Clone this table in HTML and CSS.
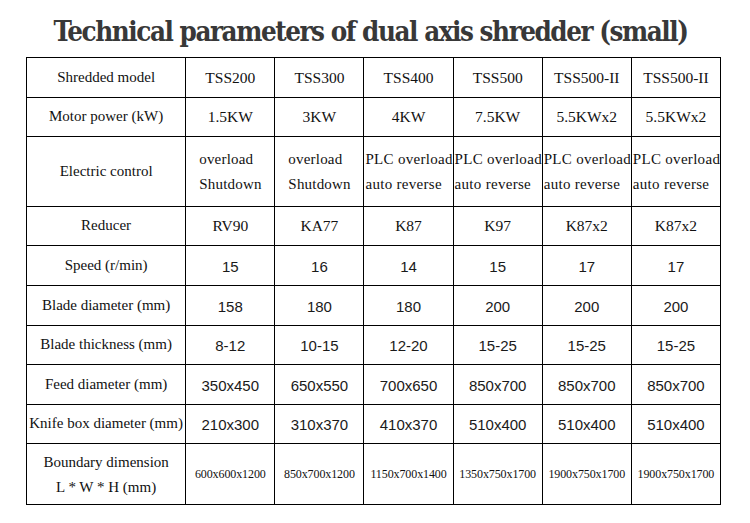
FILE: index.html
```html
<!DOCTYPE html>
<html>
<head>
<meta charset="utf-8">
<link rel="stylesheet" href="styles.css">
</head>
<body>
<div class="page">
  <h1 class="title">Technical parameters of dual axis shredder (small)</h1>
  <table class="spec">
    <colgroup>
      <col class="c-label"><col class="c-val"><col class="c-val"><col class="c-val"><col class="c-val"><col class="c-val"><col class="c-val">
    </colgroup>
    <tr class="r40">
      <td class="label">Shredded model</td>
      <td>TSS200</td><td>TSS300</td><td>TSS400</td><td>TSS500</td><td>TSS500-II</td><td>TSS500-II</td>
    </tr>
    <tr class="r39">
      <td class="label">Motor power (kW)</td>
      <td>1.5KW</td><td>3KW</td><td>4KW</td><td>7.5KW</td><td>5.5KWx2</td><td>5.5KWx2</td>
    </tr>
    <tr class="r70">
      <td class="label">Electric control</td>
      <td class="multi pad">overload<br>Shutdown</td>
      <td class="multi pad">overload<br>Shutdown</td>
      <td class="multi">PLC overload<br>auto reverse</td>
      <td class="multi">PLC overload<br>auto reverse</td>
      <td class="multi">PLC overload<br>auto reverse</td>
      <td class="multi">PLC overload<br>auto reverse</td>
    </tr>
    <tr class="r39">
      <td class="label">Reducer</td>
      <td>RV90</td><td>KA77</td><td>K87</td><td>K97</td><td>K87x2</td><td>K87x2</td>
    </tr>
    <tr class="r40">
      <td class="label">Speed (r/min)</td>
      <td class="num">15</td><td class="num">16</td><td class="num">14</td><td class="num">15</td><td class="num">17</td><td class="num">17</td>
    </tr>
    <tr class="r40">
      <td class="label">Blade diameter (mm)</td>
      <td class="num">158</td><td class="num">180</td><td class="num">180</td><td class="num">200</td><td class="num">200</td><td class="num">200</td>
    </tr>
    <tr class="r39">
      <td class="label">Blade thickness (mm)</td>
      <td class="num">8-12</td><td class="num">10-15</td><td class="num">12-20</td><td class="num">15-25</td><td class="num">15-25</td><td class="num">15-25</td>
    </tr>
    <tr class="r40">
      <td class="label">Feed diameter (mm)</td>
      <td class="num">350x450</td><td class="num">650x550</td><td class="num">700x650</td><td class="num">850x700</td><td class="num">850x700</td><td class="num">850x700</td>
    </tr>
    <tr class="r39">
      <td class="label">Knife box diameter (mm)</td>
      <td class="num">210x300</td><td class="num">310x370</td><td class="num">410x370</td><td class="num">510x400</td><td class="num">510x400</td><td class="num">510x400</td>
    </tr>
    <tr class="r61">
      <td class="label multi-c">Boundary dimension<br>L * W * H (mm)</td>
      <td class="small">600x600x1200</td><td class="small">850x700x1200</td><td class="small">1150x700x1400</td><td class="small">1350x750x1700</td><td class="small">1900x750x1700</td><td class="small">1900x750x1700</td>
    </tr>
  </table>
</div>
</body>
</html>
```

FILE: styles.css
```css
html, body {
  margin: 0;
  padding: 0;
  background: #ffffff;
}

.page {
  width: 750px;
  height: 523px;
  display: flex;
  flex-direction: column;
  align-items: flex-start;
}

.title {
  margin: 0;
  width: 100%;
  height: 57px;
  box-sizing: border-box;
  padding-top: 12px;
  padding-right: 9px;
  text-align: center;
  font-family: "DejaVu Serif", serif;
  font-stretch: condensed;
  font-weight: bold;
  font-size: 27.5px;
  line-height: 38px;
  letter-spacing: -1.45px;
  color: #383838;
}

.spec {
  margin-left: 26px;
  border-collapse: collapse;
  table-layout: fixed;
  width: 695px;
  font-family: "Liberation Serif", serif;
  font-size: 15.5px;
  color: #111;
}

.c-label { width: 159px; }
.c-val { width: 89px; }

.spec td {
  border: 1.5px solid #000;
  text-align: center;
  vertical-align: middle;
  padding: 0;
  white-space: nowrap;
  overflow: hidden;
}

.r40 { height: 40px; }
.r39 { height: 39px; }
.r70 { height: 70px; }
.r61 { height: 61px; }

.spec td.label {
  font-size: 15px;
  padding-bottom: 1px;
}

.spec td.multi {
  font-size: 15px;
  text-align: left;
  line-height: 25px;
  letter-spacing: 0.3px;
  padding-left: 1px;
  padding-top: 0;
}

.spec td.multi.pad {
  padding-left: 13px;
  letter-spacing: 0.2px;
}

.spec td.label.multi-c {
  line-height: 25px;
  padding-bottom: 0;
  padding-top: 1px;
}

.spec td.num {
  font-family: "Liberation Sans", sans-serif;
  font-size: 15px;
  padding-top: 1px;
  color: #1a1a1a;
}

.spec td.small {
  font-size: 12px;
  letter-spacing: -0.1px;
}
```
